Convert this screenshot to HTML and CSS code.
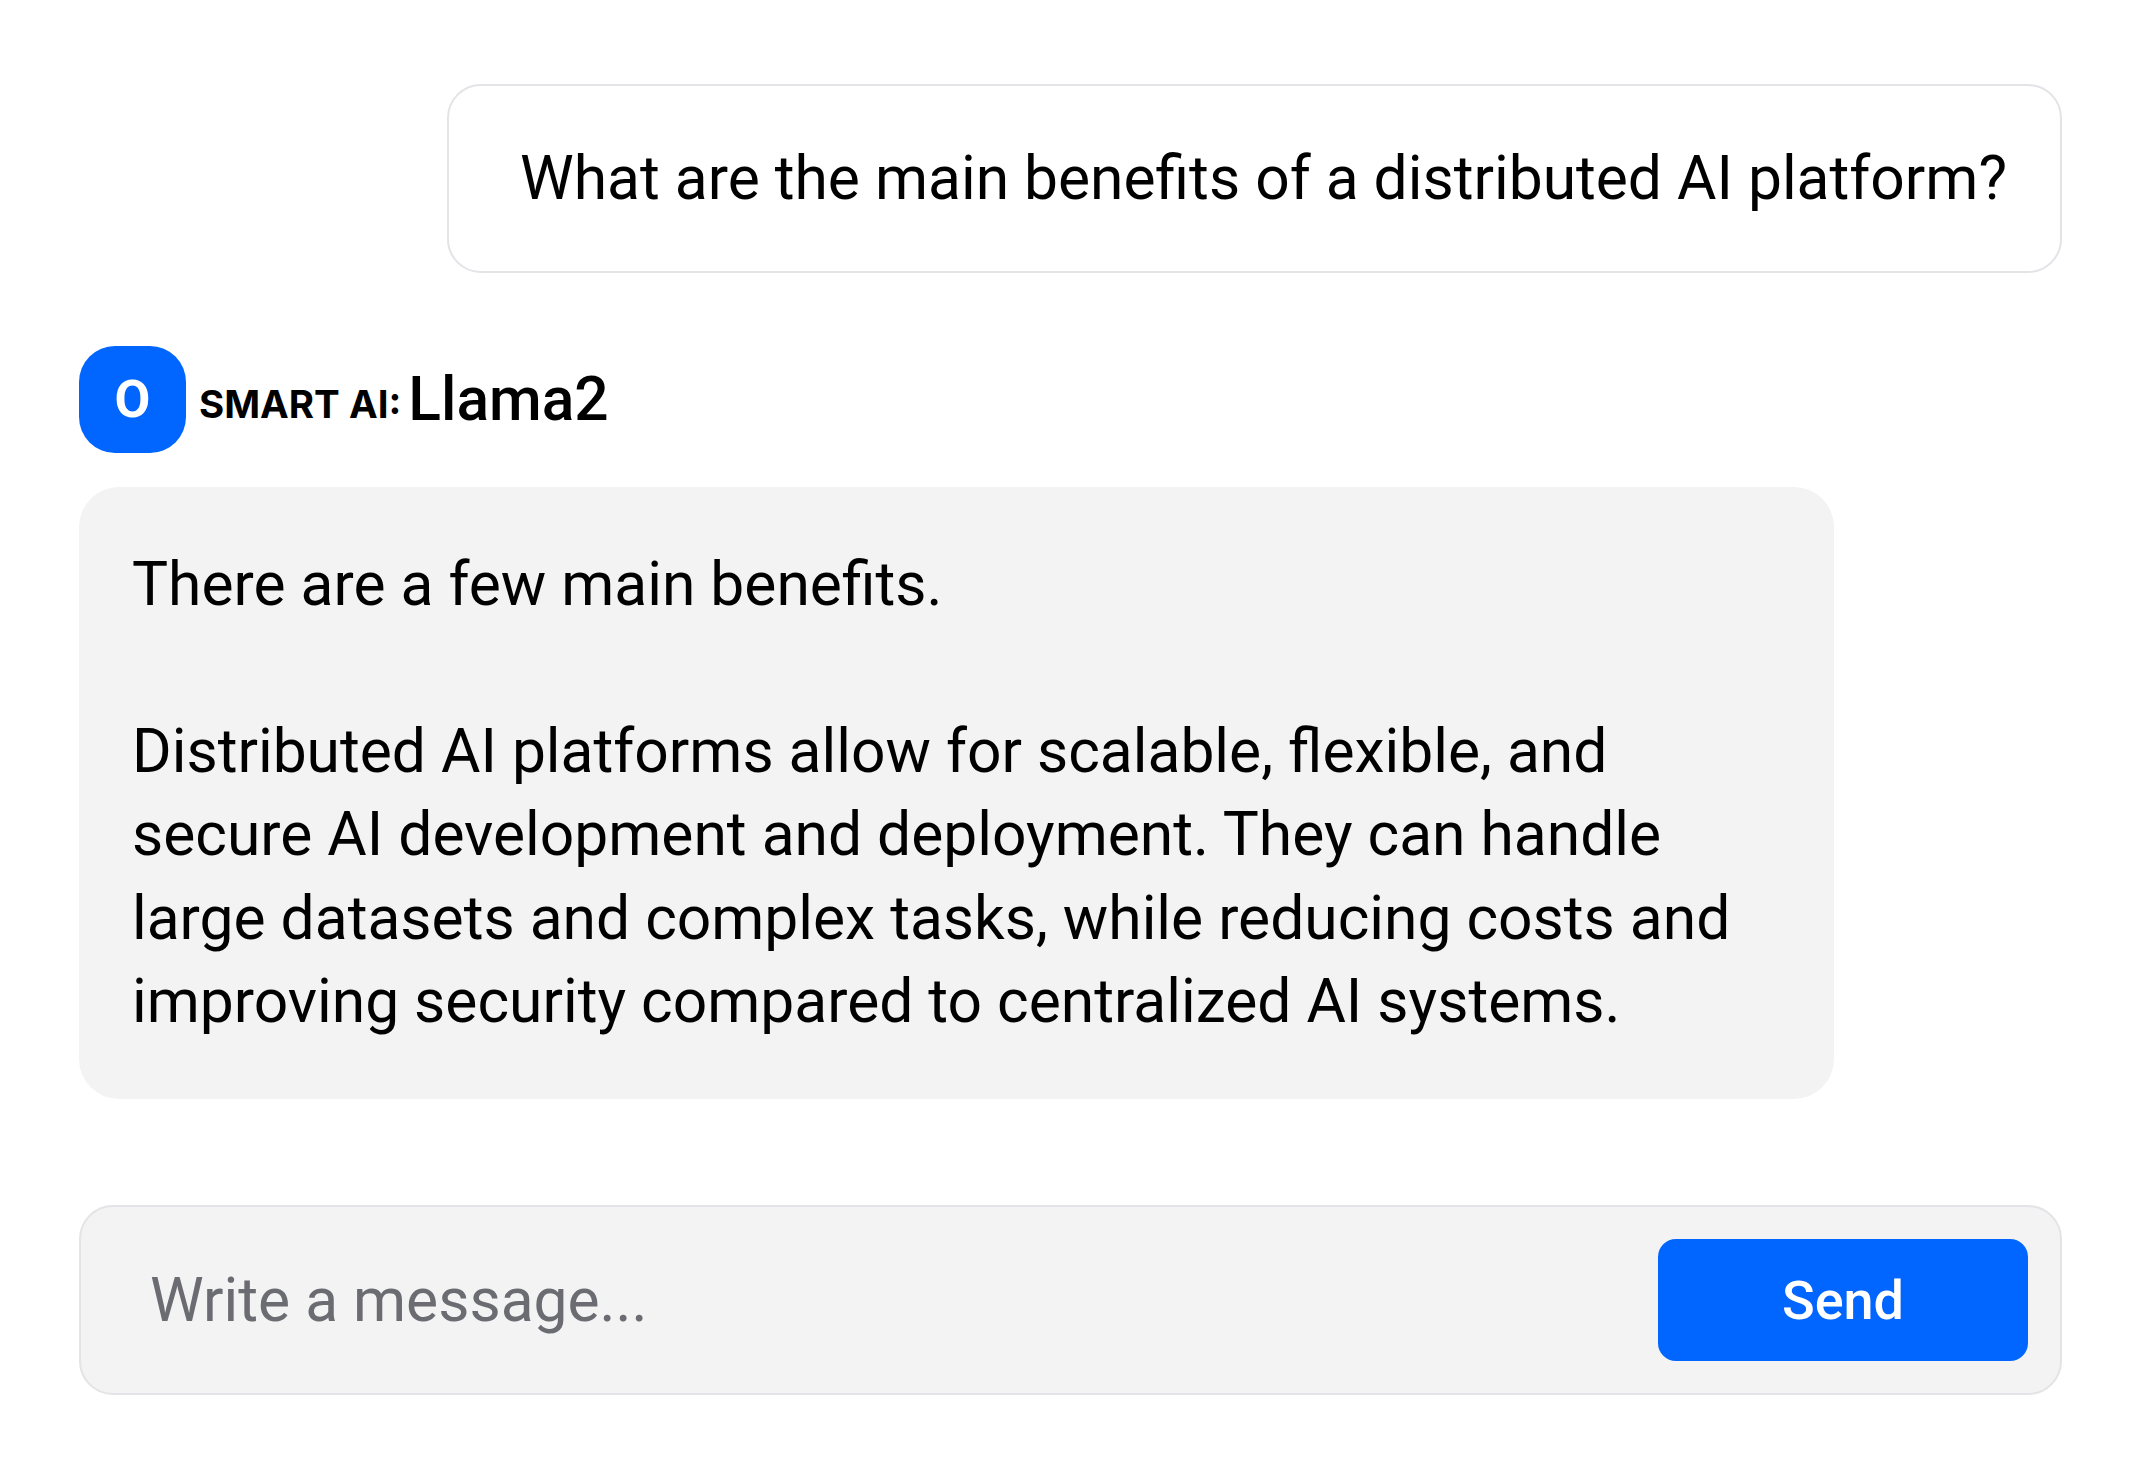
FILE: index.html
```html
<!DOCTYPE html>
<html lang="en">
<head>
<meta charset="utf-8">
<title>Chat</title>
<link rel="stylesheet" href="styles.css">
</head>
<body>
<main class="chat">
  <div class="user-row">
    <div class="user-bubble">What are the main benefits of a distributed AI platform?</div>
  </div>
  <div class="bot-header">
    <div class="avatar">O</div>
    <span class="bot-label">SMART AI:</span>
    <span class="bot-model">Llama2</span>
  </div>
  <div class="bot-bubble">There are a few main benefits.<br><br>Distributed AI platforms allow for scalable, flexible, and secure AI development and deployment. They can handle large datasets and complex tasks, while reducing costs and improving security compared to centralized AI systems.</div>
  <form class="composer">
    <input class="composer-input" type="text" placeholder="Write a message...">
    <button class="send-btn" type="button">Send</button>
  </form>
</main>
</body>
</html>
```
FILE: styles.css
```css
* { box-sizing: border-box; }
html, body { margin: 0; background: #ffffff; }
body { font-family: Roboto, "Noto Sans", Arial, sans-serif; color: #000; }

.chat {
  padding: 84px 80px 0 79px;
  display: flex;
  flex-direction: column;
}

.user-row { display: flex; justify-content: flex-end; }
.user-bubble {
  border: 2px solid #e3e3e8;
  border-radius: 34px;
  padding: 50.5px 53px 50.5px 71px;
  font-size: 60.5px;
  line-height: 84px;
  background: #fff;
}

.bot-header {
  margin-top: 73px;
  display: flex;
  align-items: center;
}
.avatar {
  width: 107px;
  height: 107px;
  border-radius: 36px;
  background: #0066ff;
  color: #fff;
  font-weight: 700;
  font-size: 52px;
  display: flex;
  align-items: center;
  justify-content: center;
}
.bot-label {
  margin-left: 13px;
  margin-top: 8px;
  font-family: Inter, Roboto, sans-serif;
  font-weight: 700;
  font-size: 38.5px;
}
.bot-model {
  margin-left: 7px;
  font-size: 60.5px;
  font-weight: 500;
}

.bot-bubble {
  margin-top: 34px;
  width: 1755px;
  background: #f3f3f3;
  border-radius: 40px;
  padding: 56px 56px 56px 53px;
  font-size: 60.5px;
  line-height: 83.4px;
}

.composer {
  margin: 106px 0 0;
  height: 190px;
  border: 2px solid #e3e3e8;
  border-radius: 34px;
  background: #f3f3f3;
  padding: 32px;
  display: flex;
  align-items: stretch;
  gap: 20px;
}
.composer-input {
  flex: 1;
  min-width: 0;
  border: none;
  outline: none;
  background: transparent;
  font-family: Roboto, sans-serif;
  font-size: 60.5px;
  padding: 0 0 0 37px;
  color: #000;
}
.composer-input::placeholder { color: #6b6b72; }
.send-btn {
  width: 370px;
  border: none;
  border-radius: 18px;
  background: #0066ff;
  color: #fff;
  font-family: Roboto, sans-serif;
  font-weight: 500;
  font-size: 54px;
}
```
